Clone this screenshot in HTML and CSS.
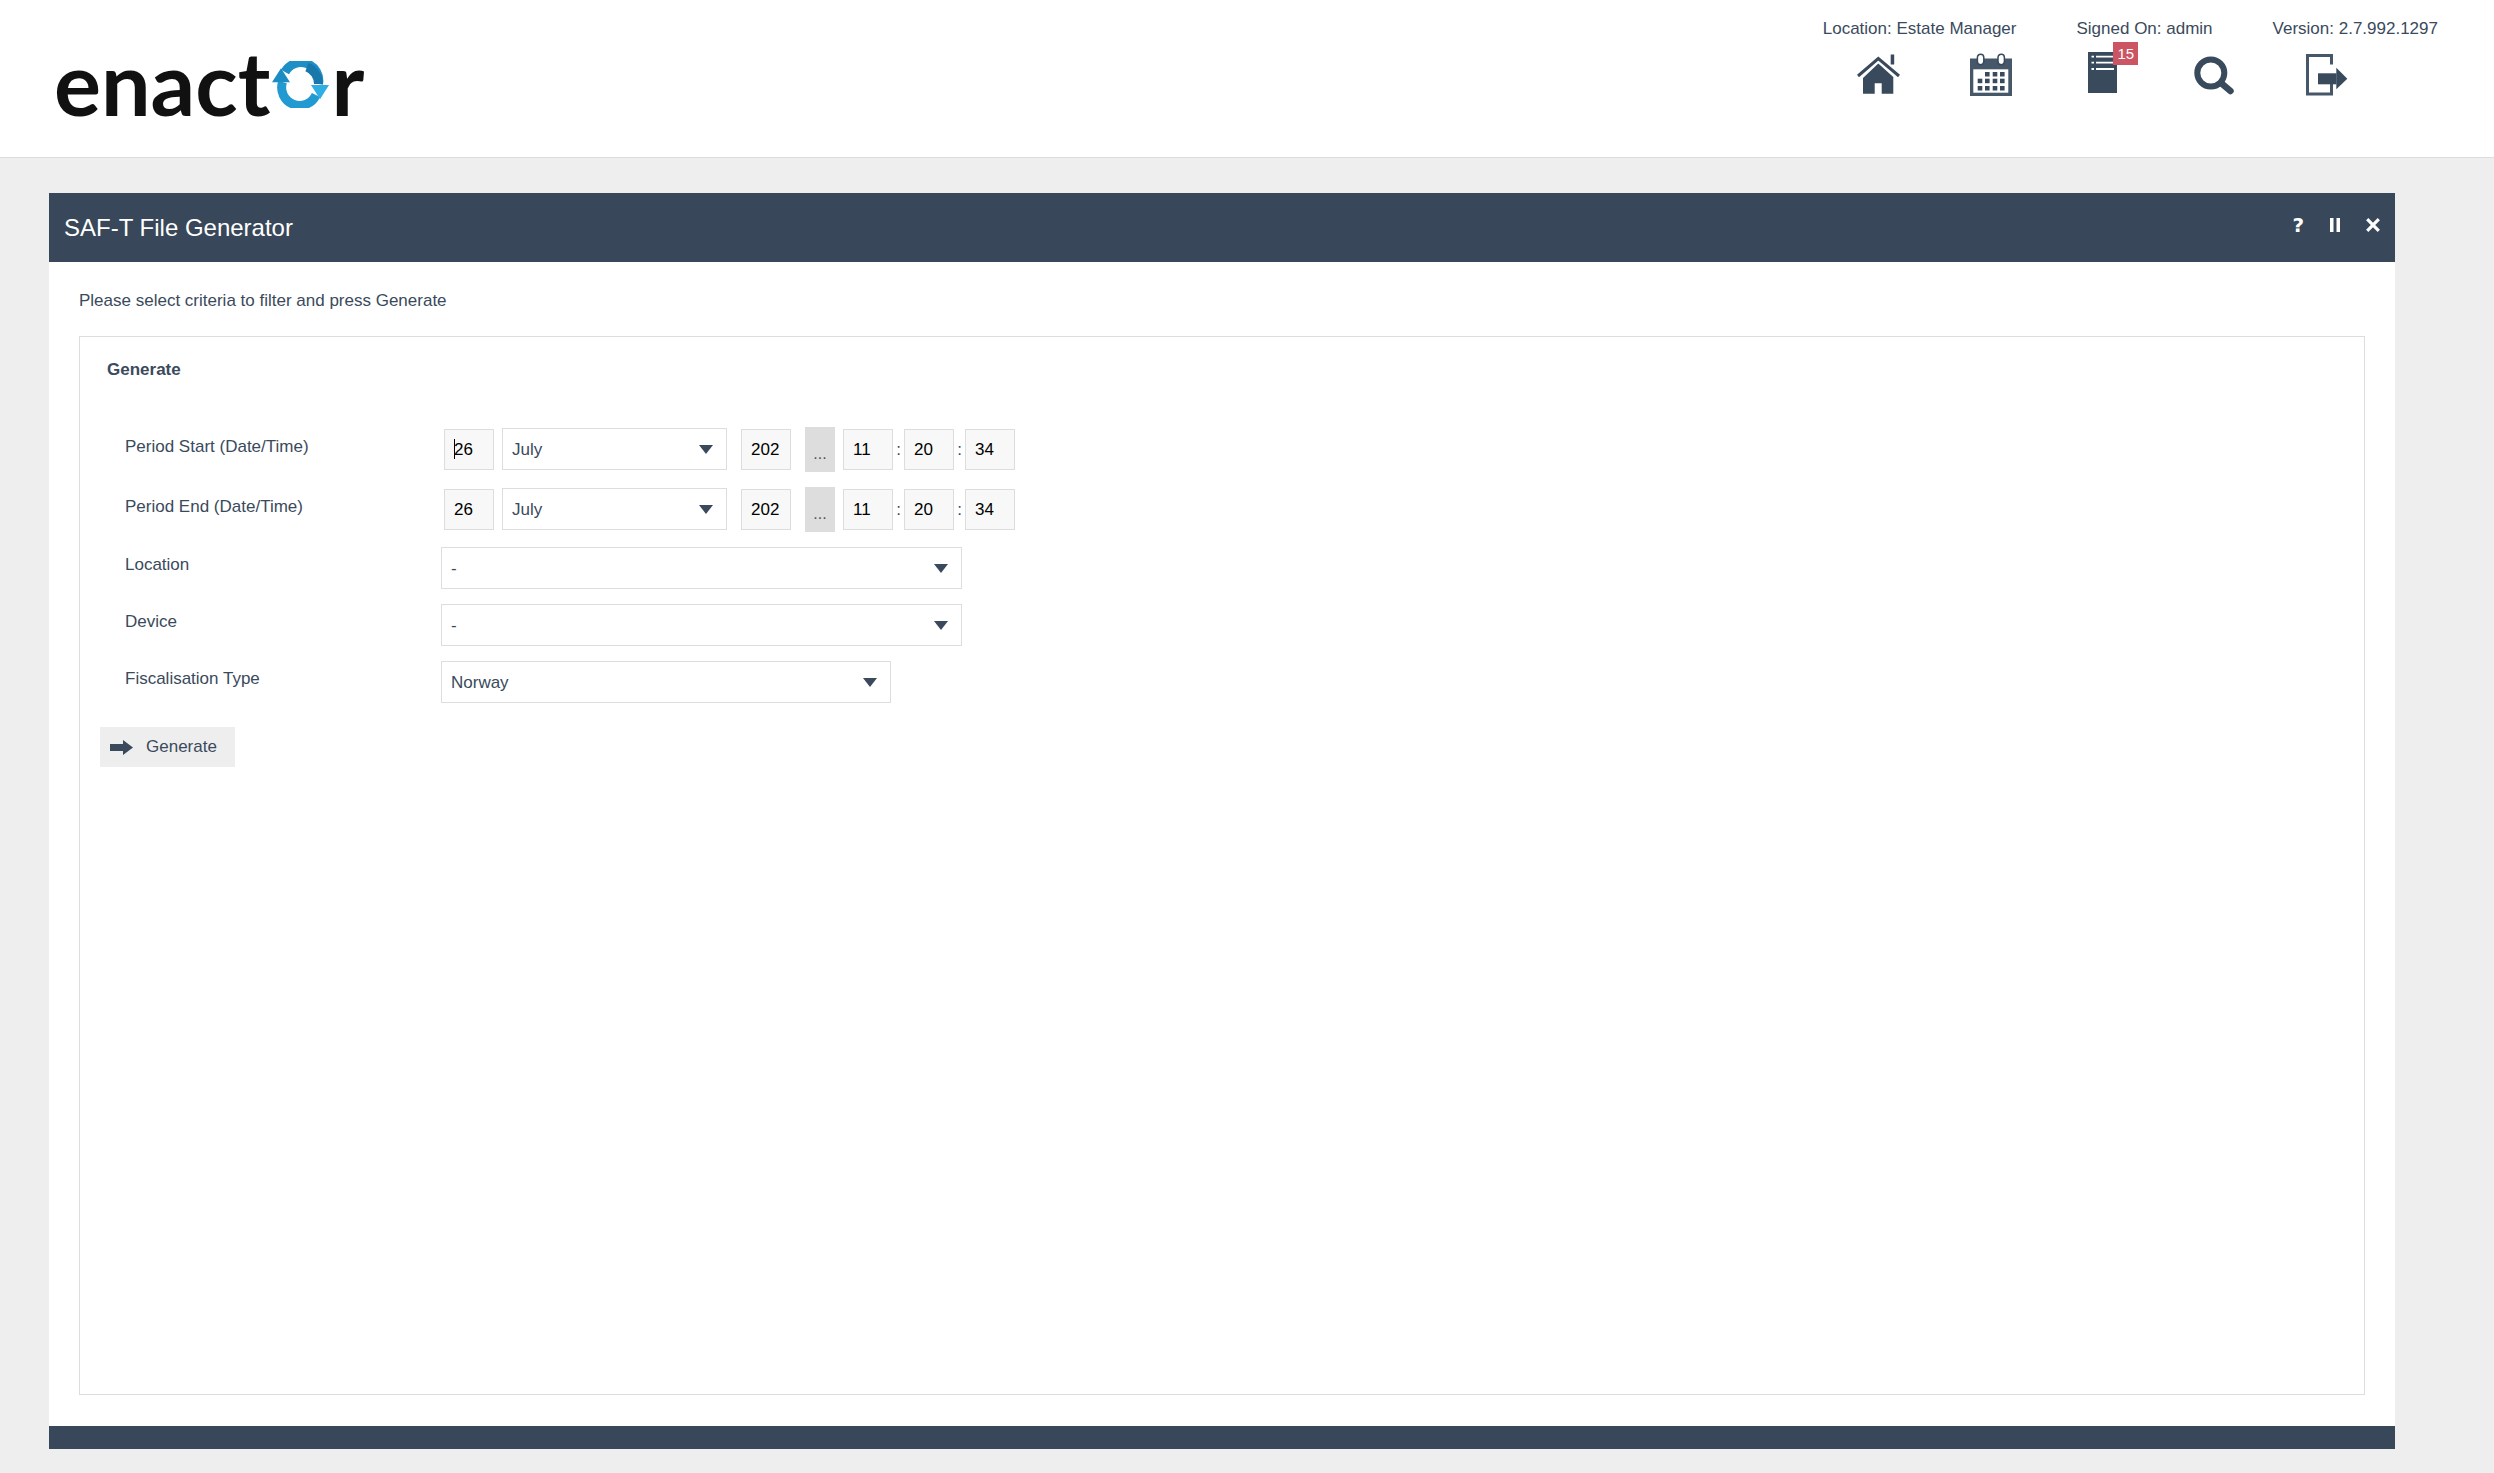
FILE: index.html
```html
<!DOCTYPE HTML>
<html lang="en">
    <head>
        <meta charset="UTF-8">
        <title>SAF-T File Generator</title>
        <link rel="stylesheet" href="styles.css">
    </head>
    <body>
        <div class="top">
            <div class="logo">
                <span>enact</span>
                <svg class="logo-o" width="58" height="47" viewBox="297 61 58 47">
                    <path d="M310 72 A18 18 0 0 1 343.500 84" fill="none" stroke="#1d8fc6" stroke-width="9"/>
                    <path d="M332 67 A18 18 0 0 1 343.500 84" fill="none" stroke="#1878ab" stroke-width="9"/>
                    <path d="M341 95 A18 18 0 0 1 307.500 82" fill="none" stroke="#219ad2" stroke-width="9"/>
                    <path d="M306 68.300 L315 82.300 H297 Z" fill="#1c8cc2"/>
                    <path d="M336 85 H354 L345 99.300 Z" fill="#2eaee2"/>
                </svg>
                <span>r</span>
            </div>
            <div class="top-right">
                <div class="info">
                    <span>Location: Estate Manager</span>
                    <span>Signed On: admin</span>
                    <span>Version: 2.7.992.1297</span>
                </div>
                <div class="icons">
                    <a class="icon" href="#">
                        <svg width="43" height="45" viewBox="0 -2 43 45">
                            <path d="M1 22 L21.300 4.500 L42 22" fill="none" stroke="#384a5c" stroke-width="3"/>
                            <rect x="33.700" y="0.500" width="3.500" height="10" fill="#384a5c"/>
                            <path d="M6 24 L21.300 9.500 L36.300 23 V39.700 H24.700 V29.300 H17.700 V39.700 H6 Z" fill="#384a5c"/>
                        </svg>
                    </a>
                    <a class="icon" href="#">
                        <svg width="42" height="45" viewBox="0 -1 42 45">
                            <rect x="0" y="5.500" width="42" height="37.500" fill="#465769"/>
                            <rect x="3.300" y="16.300" width="35" height="23.400" fill="#fff"/>
                            <rect x="7.400" y="1.200" width="6.400" height="10.500" rx="3.200" fill="#fff" stroke="#384a5c" stroke-width="1.500"/>
                            <rect x="28" y="1.200" width="6.400" height="10.500" rx="3.200" fill="#fff" stroke="#384a5c" stroke-width="1.500"/>
                            <g fill="#384a5c">
                                <rect x="15" y="19" width="4.600" height="4.500"/>
                                <rect x="22.700" y="19" width="4.600" height="4.500"/>
                                <rect x="30" y="19" width="4.600" height="4.500"/>
                                <rect x="7.700" y="25.700" width="4.600" height="4.500"/>
                                <rect x="15" y="25.700" width="4.600" height="4.500"/>
                                <rect x="22.700" y="25.700" width="4.600" height="4.500"/>
                                <rect x="30" y="25.700" width="4.600" height="4.500"/>
                                <rect x="7.700" y="33" width="4.600" height="4.500"/>
                                <rect x="15" y="33" width="4.600" height="4.500"/>
                                <rect x="22.700" y="33" width="4.600" height="4.500"/>
                                <rect x="30" y="33" width="4.600" height="4.500"/>
                            </g>
                        </svg>
                    </a>
                    <a class="icon" href="#">
                        <span class="notes">
                            <svg width="29" height="45" viewBox="0 0 29 45">
                                <rect x="0" y="0" width="29" height="41" fill="#384a5c"/>
                                <path d="M8 4.700 H26 M8 10.700 H26 M8 17 H26 M3.500 4.700 H6 M3.500 10.700 H6 M3.500 17 H6" stroke="#fff" stroke-width="1.800"/>
                            </svg>
                            <span class="badge">15</span>
                        </span>
                    </a>
                    <a class="icon" href="#">
                        <svg width="41" height="45" viewBox="0 -4 41 45">
                            <circle cx="16.800" cy="17" r="13.500" fill="none" stroke="#384a5c" stroke-width="6"/>
                            <path d="M27 27 L36.500 35" stroke="#384a5c" stroke-width="6.500" stroke-linecap="round"/>
                        </svg>
                    </a>
                    <a class="icon" href="#">
                        <svg width="42" height="45" viewBox="0 -2 42 45">
                            <path d="M25.500 10.500 V1.500 H1.500 V40 H25.500 V30" fill="none" stroke="#465769" stroke-width="3"/>
                            <rect x="12" y="19.300" width="18.500" height="11" fill="#384a5c"/>
                            <path d="M30.300 13.700 L41.300 24.800 L30.300 35.300 Z" fill="#384a5c"/>
                        </svg>
                    </a>
                </div>
            </div>
        </div>

        <div class="panel">
            <div class="panel-head">
                <h1>SAF-T File Generator</h1>
                <div class="panel-tools">
                    <span class="tool-help">?</span>
                    <svg width="10" height="14" viewBox="0 0 10 14"><path d="M0 0 H3.500 V14 H0 Z M6.500 0 H10 V14 H6.500 Z" fill="#fff"/></svg>
                    <svg width="14" height="14" viewBox="0 0 14 14"><path d="M1.200 1.200 L12.800 12.800 M12.800 1.200 L1.200 12.800" stroke="#fff" stroke-width="3.200"/></svg>
                </div>
            </div>
            <div class="panel-body">
                <p class="msg">Please select criteria to filter and press Generate</p>
                <div class="box">
                    <h2>Generate</h2>

                    <div class="row">
                        <label class="title">Period Start (Date/Time)</label>
                        <div class="date">
                            <span class="caret-wrap">
                                <input class="ipt" type="text" value="26">
                                <span class="caret"></span>
                            </span>
                            <span class="sel sel-month">
                                <select><option>July</option></select>
                            </span>
                            <input class="ipt year" type="text" value="202">
                            <button class="dots" type="button">...</button>
                            <input class="ipt hour" type="text" value="11">
                            <span class="colon">:</span>
                            <input class="ipt" type="text" value="20">
                            <span class="colon">:</span>
                            <input class="ipt" type="text" value="34">
                        </div>
                    </div>

                    <div class="row">
                        <label class="title">Period End (Date/Time)</label>
                        <div class="date">
                            <input class="ipt" type="text" value="26">
                            <span class="sel sel-month">
                                <select><option>July</option></select>
                            </span>
                            <input class="ipt year" type="text" value="202">
                            <button class="dots" type="button">...</button>
                            <input class="ipt hour" type="text" value="11">
                            <span class="colon">:</span>
                            <input class="ipt" type="text" value="20">
                            <span class="colon">:</span>
                            <input class="ipt" type="text" value="34">
                        </div>
                    </div>

                    <div class="row">
                        <label class="title">Location</label>
                        <span class="sel sel-wide">
                            <select><option>-</option></select>
                        </span>
                    </div>

                    <div class="row">
                        <label class="title">Device</label>
                        <span class="sel sel-wide">
                            <select><option>-</option></select>
                        </span>
                    </div>

                    <div class="row">
                        <label class="title">Fiscalisation Type</label>
                        <span class="sel sel-type">
                            <select><option>Norway</option></select>
                        </span>
                    </div>

                    <a id="btn" href="#">
                        <svg width="23" height="15" viewBox="0 0 23 15"><path d="M0 4 H13 V0 L23 7.500 L13 15 V11 H0 Z" fill="#384a5c"/></svg>
                        Generate
                    </a>
                </div>
            </div>
            <div class="panel-foot"></div>
        </div>
    </body>
</html>
```

FILE: styles.css
```css
body,html{
margin: 0;
padding: 0;
font-family: "Liberation Sans", Arial, sans-serif;
background-color: #eee;
color: #3a4a5c;
}
a{
color: inherit;
text-decoration: none;
}
.top{
height: 157px;
background-color: #fff;
border-bottom: 1px solid #ddd;
display: flex;
justify-content: space-between;
}
.logo{
display: flex;
align-items: flex-start;
padding: 32px 0 0 54px;
font-family: Lato, sans-serif;
font-weight: 700;
font-size: 88px;
line-height: 100px;
color: #111;
}
.logo-o{
margin: 29px 1px 0 2px;
}
.top-right{
display: flex;
flex-direction: column;
padding-right: 29px;
}
.info{
display: flex;
justify-content: flex-end;
gap: 60px;
padding: 19px 27px 0 0;
font-size: 17px;
line-height: 20px;
}
.icons{
display: flex;
margin-top: 13px;
}
.icon{
width: 112px;
display: flex;
justify-content: center;
}
.notes{
position: relative;
display: block;
height: 45px;
}
.badge{
position: absolute;
left: 25px;
top: -10px;
width: 25px;
height: 23px;
background-color: #cc5563;
color: #fff;
font-size: 15px;
line-height: 23px;
text-align: center;
}
.panel{
width: 2346px;
margin: 35px 0 0 49px;
}
.panel-head{
height: 69px;
background-color: #384759;
color: #fff;
display: flex;
align-items: center;
justify-content: space-between;
padding: 0 15px;
}
h1{
margin: 0;
font-size: 24px;
font-weight: normal;
}
.panel-tools{
display: flex;
align-items: center;
gap: 26px;
margin-bottom: 6px;
}
.tool-help{
font-family: "DejaVu Sans", sans-serif;
font-weight: bold;
font-size: 20px;
line-height: 20px;
}
.panel-body{
height: 1164px;
box-sizing: border-box;
background-color: #fff;
padding: 29px 30px 31px;
display: flex;
flex-direction: column;
}
.msg{
margin: 0 0 25px;
font-size: 17px;
line-height: 20px;
}
.box{
flex: 1;
border: 1px solid #ddd;
padding: 0 20px;
}
h2{
margin: 23px 0 47px 7px;
font-size: 17px;
line-height: 20px;
}
.row{
display: flex;
align-items: center;
margin-bottom: 15px;
padding-left: 25px;
}
.title{
width: 316px;
font-size: 17px;
line-height: 20px;
margin-bottom: 6px;
}
.date{
display: flex;
align-items: center;
height: 45px;
padding-left: 3px;
}
.ipt{
box-sizing: border-box;
width: 50px;
height: 41px;
border: 1px solid #ddd;
background-color: #f8f8f8;
padding: 0 0 0 9px;
font-family: inherit;
font-size: 17px;
color: #000;
outline: none;
}
.caret-wrap{
position: relative;
display: block;
height: 41px;
}
.caret{
position: absolute;
left: 10px;
top: 10px;
width: 1px;
height: 20px;
background-color: #000;
}
.sel{
position: relative;
display: block;
height: 42px;
}
.sel select{
box-sizing: border-box;
width: 100%;
height: 42px;
border: 1px solid #ddd;
background-color: #fff;
padding: 0 0 0 9px;
font-family: inherit;
font-size: 17px;
color: #3a4a5c;
appearance: none;
outline: none;
border-radius: 0;
}
.sel::after{
content: "";
position: absolute;
right: 14px;
top: 17px;
border-left: 7px solid transparent;
border-right: 7px solid transparent;
border-top: 9px solid #3a4a5c;
}
.sel-month{
width: 225px;
margin: 0 0 1px 8px;
}
.sel-wide{
width: 521px;
}
.sel-type{
width: 450px;
}
.year{
margin-left: 14px;
}
.dots{
width: 30px;
height: 45px;
margin-left: 14px;
border: none;
background-color: #ddd;
padding: 8px 0 0;
font-family: inherit;
font-size: 16px;
color: #555;
}
.hour{
margin-left: 8px;
}
.colon{
width: 11px;
text-align: center;
font-size: 17px;
}
#btn{
width: 135px;
height: 40px;
box-sizing: border-box;
margin-top: 24px;
padding-left: 10px;
display: flex;
align-items: center;
gap: 13px;
background-color: #eee;
font-size: 17px;
}
.panel-foot{
height: 23px;
background-color: #384759;
}
```
